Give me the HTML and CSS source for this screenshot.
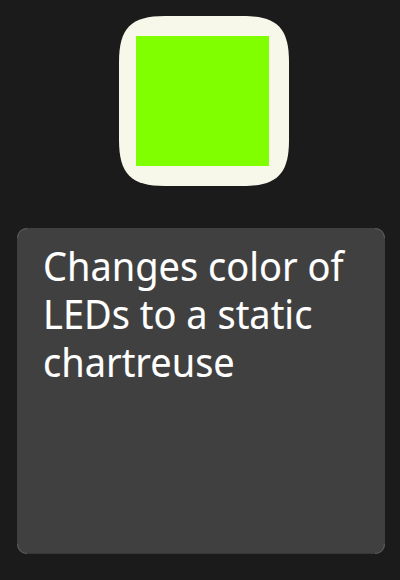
FILE: index.html
```html
<!DOCTYPE html>
<html lang="en">
<head>
<meta charset="utf-8">
<title>LED color</title>
<link rel="stylesheet" href="styles.css">
</head>
<body>
<main class="screen">
<svg class="swatch" viewBox="0 0 170 170" role="img" aria-label="Chartreuse">
<path class="swatch-frame" d="M0 46C0 12 12 0 46 0H124C158 0 170 12 170 46V124C170 158 158 170 124 170H46C12 170 0 158 0 124Z"/>
<path class="swatch-color" d="M17 20H150V150H17Z"/>
</svg>
<section class="card">
<svg class="card-corners" viewBox="0 0 368 326" aria-hidden="true"><path d="M.5 10Q1 1 10 .5M358 .5Q367 1 367.5 10M.5 316Q1 325 10 325.5M358 325.5Q367 325 367.5 316"/></svg>
<p class="description">Changes color of<br>LEDs to a static<br>chartreuse</p>
</section>
</main>
</body>
</html>
```
FILE: styles.css
```css
body {
  margin: 0;
  background: #1b1b1b;
}

.screen {
  box-sizing: border-box;
  height: 580px;
  padding: 16px 15px 26px 17px;
  display: flex;
  flex-direction: column;
  gap: 42px;
}

.swatch {
  width: 170px;
  height: 170px;
  margin-left: 102px;
}

.swatch-frame { fill: #f8f8ea; }
.swatch-color { fill: #80ff00; }

.card {
  position: relative;
  box-sizing: border-box;
  flex: 1;
  padding: 14px 26px;
  border-radius: 10px;
  background: #404040;
  box-shadow: inset 0 -1px #363636;
}

.card-corners {
  position: absolute;
  inset: 0;
  width: 100%;
  height: 100%;
  fill: none;
  stroke: #686868;
  stroke-width: 0.8;
}

.description {
  margin: 0;
  color: #fff;
  font: 40px/48px "Noto Sans", sans-serif;
  white-space: nowrap;
  transform: scaleX(0.949);
  transform-origin: left top;
  -webkit-text-stroke: 0.1px #fff;
}
```
